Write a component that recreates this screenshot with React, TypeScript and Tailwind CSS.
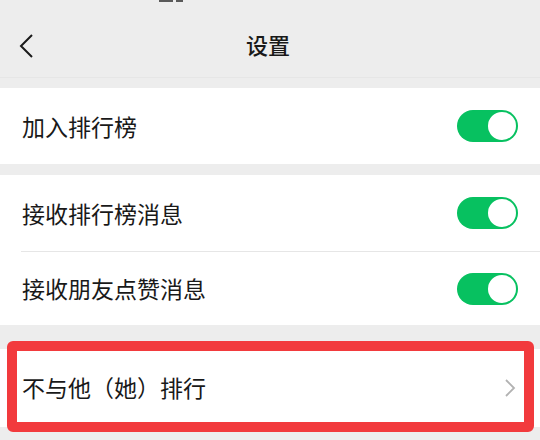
import React from "react";

const font = { fontFamily: '"Noto Sans CJK SC", "Noto Sans", sans-serif' };

function Toggle() {
  return (
    <div className="w-[61px] h-[32px] rounded-full bg-[#07c160] flex items-center justify-end pr-[2px]">
      <div className="w-[28px] h-[28px] rounded-full bg-white" />
    </div>
  );
}

function Row({ label, toggle = true, h = "h-[76px]" }: { label: string; toggle?: boolean; h?: string }) {
  return (
    <div className={`${h} flex items-center justify-between pl-[22px] pr-[22px] bg-white`}>
      <span className="text-[23px] leading-none text-[#191919]">{label}</span>
      {toggle && <Toggle />}
    </div>
  );
}

export default function App() {
  return (
    <div className="w-[540px] h-[440px] bg-[#ededed] overflow-hidden flex flex-col" style={font}>
      <div className="h-[2px] flex">
        <div className="ml-[159px] w-[14px] h-[2px] bg-[#5a5a5a]" />
        <div className="ml-[3px] w-[7px] h-[2px] bg-[#5a5a5a]" />
      </div>
      <div className="h-[76px] relative flex items-center justify-center border-b border-[#e6e6e6]">
        <svg className="absolute left-[18px] top-[31px]" width="18" height="26" viewBox="0 0 18 26">
          <path d="M14 2 L3 13 L14 24" fill="none" stroke="#1a1a1a" strokeWidth="2" />
        </svg>
        <span className="text-[22px] font-medium text-[#191919] leading-none mt-[8px] ml-[-4px]">设置</span>
      </div>
      <div className="h-[10px]" />
      <Row label="加入排行榜" />
      <div className="h-[11px]" />
      <Row label="接收排行榜消息" />
      <div className="bg-white pl-[21px]">
        <div className="h-px bg-[#e6e6e6]" />
      </div>
      <Row label="接收朋友点赞消息" h="h-[73px]" />
      <div className="h-[24px]" />
      <div className="relative h-[78px] flex items-center justify-between pl-[22px] pr-[24px] bg-white">
        <span className="text-[23px] leading-none text-[#191919] -mt-[2px]">不与他（她）排行</span>
        <svg width="12" height="18" viewBox="0 0 12 18">
          <path d="M2 1 L10 9 L2 17" fill="none" stroke="#b2b2b2" strokeWidth="1.8" />
        </svg>
        <div className="absolute left-[7px] right-[6px] top-[-8px] bottom-[-5px] border-[10px] border-[#f23a3d] rounded-[6px]" />
      </div>
    </div>
  );
}
